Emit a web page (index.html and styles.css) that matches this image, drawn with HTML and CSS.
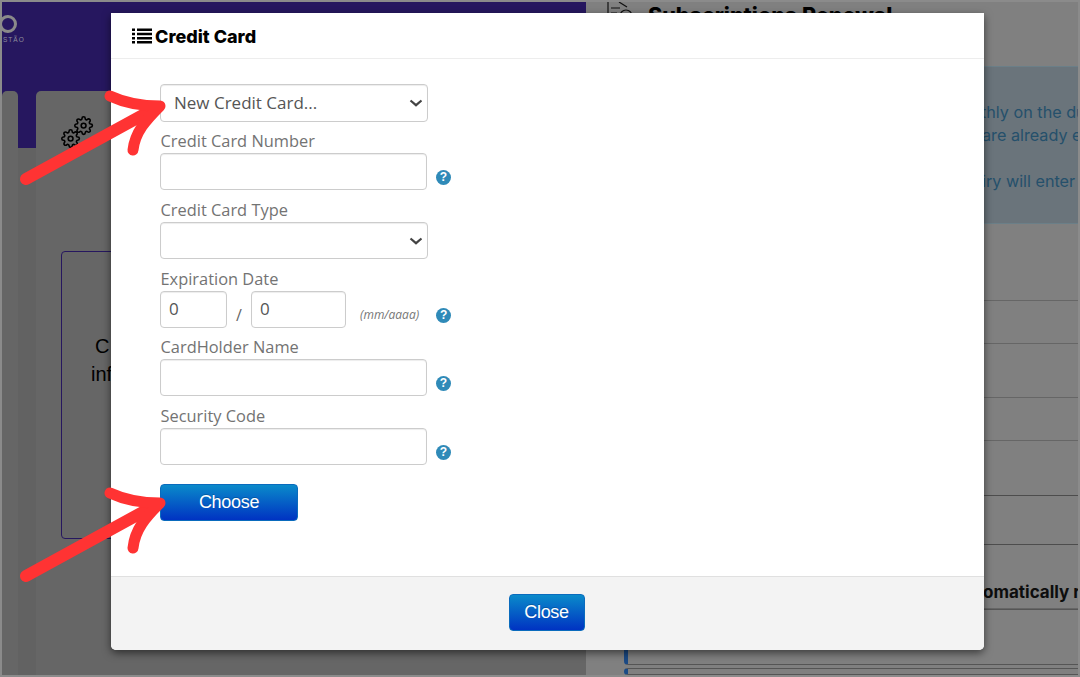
FILE: index.html
```html
<!DOCTYPE html>
<html lang="en">
<head>
<meta charset="utf-8">
<title>Credit Card</title>
<link rel="stylesheet" href="styles.css">
</head>
<body>
<div class="stage">
  <div class="page">
    <section class="left">
      <div class="brand">
        <span class="brand-ring"></span>
        <span class="brand-text">STÃO</span>
      </div>
      <div class="tabs">
        <div class="tab tab-narrow"></div>
        <div class="tab tab-main">
          <svg class="gears" viewBox="0 0 34 34" width="34" height="34" aria-hidden="true">
            <g transform="translate(0 13) scale(.8)" class="gear"><circle cx="12" cy="12" r="3"/><path d="M19.4 15a1.65 1.65 0 0 0 .33 1.82l.06.06a2 2 0 0 1 0 2.83 2 2 0 0 1-2.83 0l-.06-.06a1.65 1.65 0 0 0-1.82-.33 1.65 1.65 0 0 0-1 1.51V21a2 2 0 0 1-2 2 2 2 0 0 1-2-2v-.09A1.65 1.65 0 0 0 9 19.4a1.65 1.65 0 0 0-1.82.33l-.06.06a2 2 0 0 1-2.83 0 2 2 0 0 1 0-2.83l.06-.06a1.65 1.65 0 0 0 .33-1.82 1.65 1.65 0 0 0-1.51-1H3a2 2 0 0 1-2-2 2 2 0 0 1 2-2h.09A1.65 1.65 0 0 0 4.6 9a1.65 1.65 0 0 0-.33-1.82l-.06-.06a2 2 0 0 1 0-2.83 2 2 0 0 1 2.83 0l.06.06a1.65 1.65 0 0 0 1.82.33H9a1.65 1.65 0 0 0 1-1.51V3a2 2 0 0 1 2-2 2 2 0 0 1 2 2v.09a1.65 1.65 0 0 0 1 1.51 1.65 1.65 0 0 0 1.82-.33l.06-.06a2 2 0 0 1 2.83 0 2 2 0 0 1 0 2.83l-.06.06a1.65 1.65 0 0 0-.33 1.82V9a1.65 1.65 0 0 0 1.51 1H21a2 2 0 0 1 2 2 2 2 0 0 1-2 2h-.09a1.65 1.65 0 0 0-1.51 1z"/></g>
            <g transform="translate(13 0) scale(.8)" class="gear"><circle cx="12" cy="12" r="3"/><path d="M19.4 15a1.65 1.65 0 0 0 .33 1.82l.06.06a2 2 0 0 1 0 2.83 2 2 0 0 1-2.83 0l-.06-.06a1.65 1.65 0 0 0-1.82-.33 1.65 1.65 0 0 0-1 1.51V21a2 2 0 0 1-2 2 2 2 0 0 1-2-2v-.09A1.65 1.65 0 0 0 9 19.4a1.65 1.65 0 0 0-1.82.33l-.06.06a2 2 0 0 1-2.83 0 2 2 0 0 1 0-2.83l.06-.06a1.65 1.65 0 0 0 .33-1.82 1.65 1.65 0 0 0-1.51-1H3a2 2 0 0 1-2-2 2 2 0 0 1 2-2h.09A1.65 1.65 0 0 0 4.6 9a1.65 1.65 0 0 0-.33-1.82l-.06-.06a2 2 0 0 1 0-2.83 2 2 0 0 1 2.83 0l.06.06a1.65 1.65 0 0 0 1.82.33H9a1.65 1.65 0 0 0 1-1.51V3a2 2 0 0 1 2-2 2 2 0 0 1 2 2v.09a1.65 1.65 0 0 0 1 1.51 1.65 1.65 0 0 0 1.82-.33l.06-.06a2 2 0 0 1 2.83 0 2 2 0 0 1 0 2.83l-.06.06a1.65 1.65 0 0 0-.33 1.82V9a1.65 1.65 0 0 0 1.51 1H21a2 2 0 0 1 2 2 2 2 0 0 1-2 2h-.09a1.65 1.65 0 0 0-1.51 1z"/></g>
          </svg>
          <div class="info-box">
            <p class="info-text">C<br><span class="info-second">inf</span></p>
          </div>
        </div>
      </div>
    </section>
    <section class="right">
      <header class="right-head">
        <svg class="renew-icon" viewBox="0 0 26 20" width="26" height="20" aria-hidden="true">
          <path d="M1 0v12M4 7h9M4 12h6M12 1l8 5"/>
          <circle cx="19" cy="15" r="6"/>
        </svg>
        <h2 class="right-title">Subscriptions Renewal</h2>
      </header>
      <div class="alert">
        <p class="alert-line line-a">thly on the du</p>
        <p class="alert-line line-b">are already e</p>
        <p class="alert-line line-c"></p>
        <p class="alert-line line-b">iry will enter</p>
      </div>
      <div class="rows">
        <div class="row"></div>
        <div class="row"></div>
        <div class="row"></div>
        <div class="row"></div>
        <div class="row row-dark"></div>
        <div class="row row-dark"></div>
        <div class="row row-heading"><span class="auto-text">omatically r</span></div>
      </div>
      <div class="sub-card sub-first"></div>
      <div class="sub-card sub-second"></div>
    </section>
  </div>

  <div class="modal">
    <header class="modal-head">
      <svg class="list-icon" viewBox="0 0 20 16" width="20" height="16" aria-hidden="true">
        <path d="M0 .5h3v2.6H0zM5 .5h15v2.6H5zM0 4.7h3v2.6H0zM5 4.7h15v2.6H5zM0 8.9h3v2.6H0zM5 8.9h15v2.6H5zM0 13h3v2.6H0zM5 13h15v2.6H5z"/>
      </svg>
      <h1 class="modal-title">Credit Card</h1>
    </header>
    <form class="modal-body">
      <select class="control control-first">
        <option>New Credit Card...</option>
      </select>
      <div class="field">
        <label class="field-label">Credit Card Number</label>
        <div class="field-row">
          <input class="control input-wide" type="text">
          <span class="help">?</span>
        </div>
      </div>
      <div class="field">
        <label class="field-label">Credit Card Type</label>
        <select class="control"><option></option></select>
      </div>
      <div class="field field-tight">
        <label class="field-label">Expiration Date</label>
        <div class="field-row">
          <input class="control input-month" type="text" value="0">
          <span class="slash">/</span>
          <input class="control input-year" type="text" value="0">
          <span class="date-hint">(mm/aaaa)</span>
          <span class="help help-date">?</span>
        </div>
      </div>
      <div class="field">
        <label class="field-label">CardHolder Name</label>
        <div class="field-row">
          <input class="control input-wide" type="text">
          <span class="help">?</span>
        </div>
      </div>
      <div class="field">
        <label class="field-label">Security Code</label>
        <div class="field-row">
          <input class="control input-wide" type="text">
          <span class="help">?</span>
        </div>
      </div>
      <button class="btn btn-choose" type="button">Choose</button>
    </form>
    <footer class="modal-foot">
      <button class="btn btn-close" type="button">Close</button>
    </footer>
  </div>

  <svg class="arrows" viewBox="0 0 1080 677" width="1080" height="677" aria-hidden="true">
    <g class="arrow">
      <path class="arrow-shaft" d="M26 179 L152 110"/>
      <path d="M110 96 C125 103 142 106 160 106 C146 120 135 132 133 150"/>
    </g>
    <g class="arrow">
      <path class="arrow-shaft" d="M26 576 L152 507"/>
      <path d="M110 493 C125 500 142 503 160 503 C146 517 135 529 133 548"/>
    </g>
  </svg>
</div>
</body>
</html>
```
FILE: styles.css
```css
* { box-sizing: border-box; }
html, body { margin: 0; padding: 0; }
body { font-family: "Open Sans", "Liberation Sans", sans-serif; background: #666; }

.stage {
  position: relative;
  width: 1080px;
  height: 677px;
  overflow: hidden;
}

.page {
  display: flex;
  width: 100%;
  height: 100%;
  border: 2px solid #8b8b8b;
  overflow: hidden;
}

/* dimmed page beneath the modal */
.left {
  width: 584px;
  flex: none;
  display: flex;
  flex-direction: column;
  background: linear-gradient(#26175f 146px, #626262 146px);
}
.brand {
  height: 89px;
  display: flex;
  flex-direction: column;
  align-items: flex-start;
  padding-top: 13px;
}
.brand-ring {
  width: 18px;
  height: 18px;
  margin-left: -3px;
  border: 3px solid #8a8a8a;
  border-radius: 50%;
}
.brand-text {
  margin-top: 3px;
  margin-left: 1px;
  font: 6.5px/8px "Liberation Sans", sans-serif;
  letter-spacing: 1px;
  color: #8e8e9c;
}
.tabs {
  flex: 1;
  display: flex;
  gap: 18px;
}
.tab {
  background: #666;
  border-radius: 5px 5px 0 0;
}
.tab-narrow { width: 16px; }
.tab-main {
  flex: 1;
  display: flex;
  flex-direction: column;
  padding: 25px 0 0 25px;
}
.gears { display: block; margin-left: 0; }
.gear { fill: none; stroke: #000; stroke-width: 2; stroke-linejoin: round; }
.info-box {
  width: 400px;
  height: 288px;
  margin-top: 101px;
  border: 1px solid #26175f;
  border-radius: 4px;
  padding: 80px 0 0 33px;
}
.info-text {
  margin: 0;
  font: 20px/28px "Liberation Sans", sans-serif;
  color: #000;
}
.info-second { margin-left: -4px; }

.right {
  flex: 1;
  min-width: 0;
  display: flex;
  flex-direction: column;
  background: #808080;
  white-space: nowrap;
  overflow: hidden;
}
.right-head {
  height: 64px;
  display: flex;
  align-items: flex-start;
  padding-left: 21px;
}
.renew-icon { fill: none; stroke: #111; stroke-width: 1.2; margin-top: -1px; }
.right-title {
  margin: -1px 0 0 15px;
  font: 800 21.5px/28px Inter, sans-serif;
  color: #000;
}
.alert {
  height: 158px;
  padding-top: 34px;
  background: #6a747b;
  border: 1px solid #6b7f88;
  border-width: 1px 0;
  color: #25506b;
  font: 16.2px/23px Inter, sans-serif;
}
.alert-line { margin: 0; height: 23px; }
.line-a { padding-left: 395px; }
.line-b { padding-left: 396px; }

.rows {
  flex: none;
  display: grid;
  grid-template-rows: 77px 43px 54px 43px 55px 49px 64px;
}
.row { border-bottom: 1px solid #666; }
.row-dark { border-bottom-color: #4d4d4d; }
.row-heading {
  display: flex;
  align-items: flex-end;
  padding: 0 0 5px 397px;
  font: 700 17px/22px Inter, sans-serif;
  color: #0d0d0d;
}
.sub-card {
  margin-left: 38px;
  border: 1px solid #555;
  border-left: 4px solid #1b4a85;
  border-right: 0;
  border-radius: 4px 0 0 4px;
}
.sub-first { height: 56px; flex: none; margin-bottom: 3px; }
.sub-second { flex: 1; }

/* modal */
.modal {
  position: absolute;
  left: 111px;
  top: 13px;
  width: 873px;
  height: 637px;
  display: flex;
  flex-direction: column;
  background: #fff;
  border-radius: 0 0 5px 5px;
  box-shadow: 0 3px 9px rgba(0, 0, 0, .55);
}
.modal-head {
  height: 46px;
  flex: none;
  display: flex;
  align-items: center;
  padding: 0 0 0 21px;
  border-bottom: 1px solid #ededed;
}
.list-icon { fill: #000; margin-right: 3px; }
.modal-title {
  margin: 2px 0 0;
  font: 800 18px/22px Inter, sans-serif;
  color: #000;
}
.modal-body {
  flex: 1;
  display: flex;
  flex-direction: column;
  align-items: flex-start;
  padding: 25px 0 0 49px;
}
.control {
  display: block;
  height: 37px;
  padding: 0 9px 2px 8px;
  border: 1px solid #ccc;
  border-radius: 4px;
  background: #fff;
  font: 17px "Open Sans", sans-serif;
  color: #555;
  box-shadow: inset 0 1px 1px rgba(0, 0, 0, .075);
}
select.control {
  width: 268px;
  padding: 0 24px 2px 13px;
  appearance: none;
  background-image: url("data:image/svg+xml,%3Csvg xmlns='http://www.w3.org/2000/svg' width='14' height='8' viewBox='0 0 14 8'%3E%3Cpath d='M1.5 1.5L7 6.2l5.5-4.7' fill='none' stroke='%23444' stroke-width='2.2'/%3E%3C/svg%3E");
  background-repeat: no-repeat;
  background-position: right 4px center;
}
.control-first { height: 38px; margin-bottom: -1px; }
.field { display: flex; flex-direction: column; }
.field-tight { margin-bottom: -1px; }
.field-label {
  height: 32px;
  padding: 8px 0 0 .5px;
  font: 16.4px/24px "Open Sans", sans-serif;
  color: #737373;
}
.field-row { display: flex; align-items: flex-start; }
.input-wide { width: 267px; }
.input-month { width: 67px; }
.input-year { width: 95px; }
.slash {
  width: 24px;
  padding-top: 12px;
  text-align: center;
  font: 16px/24px "Open Sans", sans-serif;
  color: #666;
}
.date-hint {
  margin-left: 14px;
  padding-top: 16px;
  font: italic 12px/16px "Open Sans", sans-serif;
  color: #777;
}
.help {
  width: 15px;
  height: 15px;
  margin: 17px 0 0 9px;
  border-radius: 50%;
  background: #2f8ab8;
  color: #fff;
  font: 700 12px/15px "Liberation Sans", sans-serif;
  text-align: center;
}
.help-date { margin-left: 17px; }
.btn {
  display: block;
  height: 37px;
  padding: 0 0 2px;
  border: 1px solid #0a6bbd;
  border-radius: 4px;
  background: linear-gradient(#0a8aca, #0033c2);
  color: #fff;
  font: 18px/32px "Liberation Sans", sans-serif;
  letter-spacing: -.3px;
  text-shadow: 0 -1px 0 rgba(0, 0, 0, .2);
}
.btn-choose { width: 138px; margin-top: 19px; }
.modal-foot {
  height: 74px;
  flex: none;
  display: flex;
  justify-content: center;
  padding: 17px 2px 0 0;
  background: #f3f3f3;
  border-top: 1px solid #e0e0e0;
  border-radius: 0 0 5px 5px;
}
.btn-close { width: 76px; }

/* annotation arrows */
.arrows {
  position: absolute;
  left: 0;
  top: 0;
  pointer-events: none;
}
.arrow path {
  fill: none;
  stroke: #ff3333;
  stroke-width: 11;
  stroke-linecap: round;
  stroke-linejoin: round;
}
.arrow .arrow-shaft { stroke-width: 12; }
```
